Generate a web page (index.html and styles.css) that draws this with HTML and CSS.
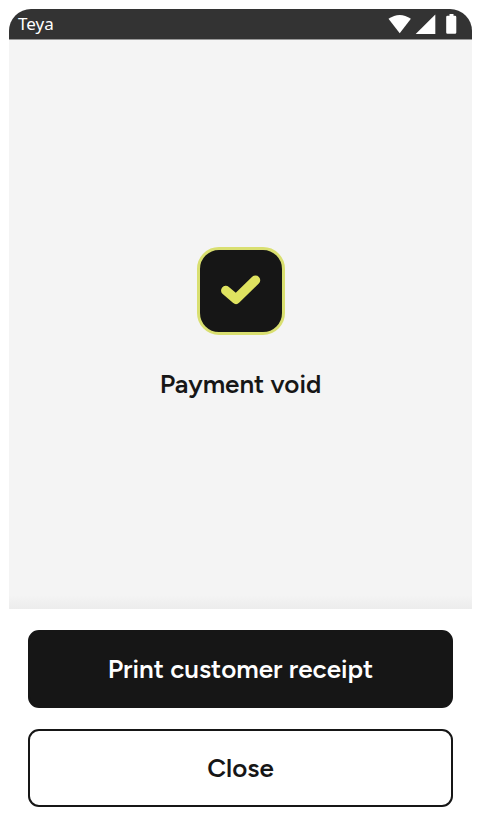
FILE: index.html
```html
<!DOCTYPE html>
<html lang="en">
<head>
<meta charset="utf-8">
<meta name="viewport" content="width=device-width, initial-scale=1">
<title>Teya</title>
<link rel="stylesheet" href="styles.css">
</head>
<body>
<div class="screen">
  <header class="status-bar">
    <span class="app-name">Teya</span>
    <svg class="status-icons" width="70" height="22" viewBox="0 0 70 22" fill="#fff" aria-hidden="true">
      <path d="M0.500 5.800Q11.700 -1.800 22.900 5.800L11.700 20.200Z"/>
      <path d="M47.300 1.600V21H27.700Z"/>
      <path d="M61.500 1h4v1.800h1.500q1.300 0 1.300 1.300v15.300q0 1.300-1.300 1.300h-7.500q-1.300 0-1.300-1.300V4.100q0-1.300 1.300-1.300h2Z"/>
    </svg>
  </header>
  <main class="result">
    <div class="result-badge">
      <svg width="82" height="82" viewBox="0 0 82 82" fill="none" aria-hidden="true">
        <path d="M25.800 40.500L36 49.200L55.500 30.200" stroke="#dfe360" stroke-width="9.500" stroke-linecap="round" stroke-linejoin="round"/>
      </svg>
    </div>
    <h1 class="result-title">Payment void</h1>
  </main>
  <footer class="actions">
    <button type="button" class="button button-primary">Print customer receipt</button>
    <button type="button" class="button button-secondary">Close</button>
  </footer>
</div>
</body>
</html>
```
FILE: styles.css
```css
* {
  box-sizing: border-box;
}

body {
  margin: 0;
  background: #fff;
  color: #161616;
  font-family: Figtree, Inter, "Liberation Sans", sans-serif;
}

.screen {
  display: flex;
  flex-direction: column;
  min-height: 100vh;
  padding: 9px 8px 0 9px;
}

.status-bar {
  display: flex;
  align-items: center;
  justify-content: space-between;
  padding: 4px 14px 4px 9px;
  border-bottom: 1px solid #999;
  border-radius: 22px 22px 0 0;
  background: #333;
  color: #fff;
}

.app-name {
  font-family: "Noto Sans", sans-serif;
  font-size: 17px;
  line-height: 22px;
}

.status-icons {
  display: block;
}

.result {
  display: flex;
  flex: 1;
  flex-direction: column;
  align-items: center;
  justify-content: center;
  gap: 33px;
  padding-bottom: 2px;
  background: linear-gradient(to top, #ececec, #f4f4f4 14px);
}

.result-badge {
  border: 3px solid #d9df70;
  border-radius: 22px;
  background: #161616;
}

.result-badge svg {
  display: block;
}

.result-title {
  margin: 0;
  font-size: 26px;
  font-weight: 600;
  line-height: 32px;
}

.actions {
  display: flex;
  flex-direction: column;
  gap: 21px;
  padding: 21px 19px 19px;
}

.button {
  min-height: 78px;
  padding: 21px;
  border: 2px solid #161616;
  border-radius: 11px;
  font: inherit;
  font-size: 26px;
  font-weight: 600;
  line-height: 32px;
}

.button-primary {
  background: #161616;
  color: #fff;
}

.button-secondary {
  background: #fff;
  color: #161616;
}
```
